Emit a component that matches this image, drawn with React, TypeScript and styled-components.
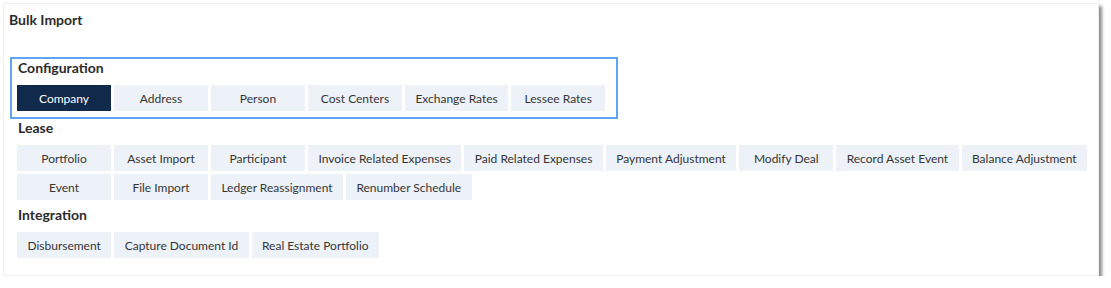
import * as React from "react";
import styled, { createGlobalStyle } from "styled-components";

const GlobalStyle = createGlobalStyle`
  html, body {
    margin: 0;
    padding: 0;
    background: #ffffff;
  }
  body {
    font-family: Lato, "Open Sans", Arial, sans-serif;
    -webkit-font-smoothing: antialiased;
  }
`;

const Panel = styled.div`
  box-sizing: border-box;
  margin: 3px 0 0 3px;
  width: 1096px;
  padding: 8px 0 11px 0;
  background: #ffffff;
  border: 1px solid #efefef;
  box-shadow: 3px 3px 3px rgba(0, 0, 0, 0.45);
`;

const Title = styled.div`
  padding-left: 5px;
  margin-bottom: 29px;
  font-size: 14px;
  line-height: 16px;
  font-weight: 700;
  color: #2b2b2b;
`;

const Section = styled.section<{ selected?: boolean }>`
  box-sizing: border-box;
  margin-left: 6px;
  width: ${(p) => (p.selected ? "fit-content" : "auto")};
  padding: ${(p) => (p.selected ? "1px 11px 6px 5px" : "1px 0 6px 7px")};
  border: ${(p) => (p.selected ? "2px solid #5ea5f4" : "none")};
`;

const SectionLabel = styled.div`
  margin-bottom: 9px;
  padding-left: 1px;
  font-size: 14px;
  line-height: 16px;
  font-weight: 700;
  color: #2b2b2b;
`;

const ButtonRow = styled.div`
  display: flex;
  flex-wrap: wrap;
  gap: 3px;
`;

const ImportButton = styled.button<{ active?: boolean }>`
  box-sizing: border-box;
  min-width: 94px;
  height: 26px;
  padding: 0 10.4px;
  border: none;
  border-radius: 0;
  background: ${(p) => (p.active ? "#11294b" : "#edf1f8")};
  color: ${(p) => (p.active ? "#ffffff" : "#363636")};
  font-family: Lato, "Open Sans", Arial, sans-serif;
  font-size: 12px;
  white-space: nowrap;
  cursor: pointer;
`;

interface ImportGroup {
  name: string;
  items: string[];
}

const groups: ImportGroup[] = [
  {
    name: "Configuration",
    items: ["Company", "Address", "Person", "Cost Centers", "Exchange Rates", "Lessee Rates"],
  },
  {
    name: "Lease",
    items: [
      "Portfolio",
      "Asset Import",
      "Participant",
      "Invoice Related Expenses",
      "Paid Related Expenses",
      "Payment Adjustment",
      "Modify Deal",
      "Record Asset Event",
      "Balance Adjustment",
      "Event",
      "File Import",
      "Ledger Reassignment",
      "Renumber Schedule",
    ],
  },
  {
    name: "Integration",
    items: ["Disbursement", "Capture Document Id", "Real Estate Portfolio"],
  },
];

export default function App() {
  const [selected, setSelected] = React.useState({ group: "Configuration", item: "Company" });

  return (
    <>
      <GlobalStyle />
      <Panel>
        <Title>Bulk Import</Title>
        {groups.map((group) => (
          <Section key={group.name} selected={group.name === selected.group}>
            <SectionLabel>{group.name}</SectionLabel>
            <ButtonRow>
              {group.items.map((item) => (
                <ImportButton
                  key={item}
                  active={group.name === selected.group && item === selected.item}
                  onClick={() => setSelected({ group: group.name, item })}
                >
                  {item}
                </ImportButton>
              ))}
            </ButtonRow>
          </Section>
        ))}
      </Panel>
    </>
  );
}
